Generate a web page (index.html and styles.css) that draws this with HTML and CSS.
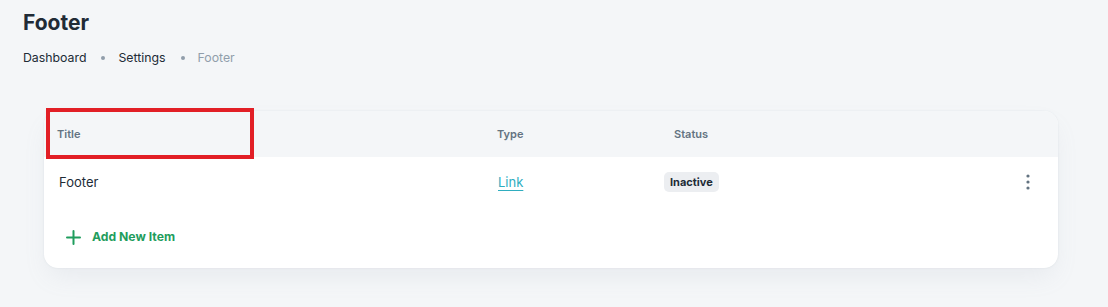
FILE: index.html
```html
<!DOCTYPE html>
<html>
<head>
<meta charset="utf-8">
<link rel="stylesheet" href="styles.css">
</head>
<body>
<div class="page">
  <h1 class="title">Footer</h1>
  <nav class="crumbs">
    <span class="crumb">Dashboard</span>
    <span class="dot"></span>
    <span class="crumb">Settings</span>
    <span class="dot"></span>
    <span class="crumb current">Footer</span>
  </nav>
  <div class="card">
    <div class="head">
      <div class="h-title">Title</div>
      <div class="h-type">Type</div>
      <div class="h-status">Status</div>
      <div class="highlight"></div>
    </div>
    <div class="row">
      <div class="c-title">Footer</div>
      <div class="c-type"><a class="link" href="#">Link</a></div>
      <div class="c-status"><span class="badge">Inactive</span></div>
      <div class="c-menu">
        <svg width="4" height="16" viewBox="0 0 4 16"><circle cx="2" cy="2" r="1.6" fill="#637381"/><circle cx="2" cy="8" r="1.6" fill="#637381"/><circle cx="2" cy="14" r="1.6" fill="#637381"/></svg>
      </div>
    </div>
    <div class="add">
      <svg width="15" height="15" viewBox="0 0 15 15"><path d="M7.5 1v13M1 7.5h13" stroke="#1f9d5d" stroke-width="2" stroke-linecap="round"/></svg>
      <span>Add New Item</span>
    </div>
  </div>
</div>
</body>
</html>
```

FILE: styles.css
```css
* { box-sizing: border-box; }
html, body { margin: 0; padding: 0; }
body {
  background: #f4f6f8;
  font-family: Inter, "Noto Sans", "Liberation Sans", sans-serif;
  color: #212b36;
  width: 1108px;
  height: 307px;
  overflow: hidden;
}
.page {
  padding: 9px 50px 0 23px;
}
.title {
  margin: 0;
  font-size: 21px;
  font-weight: 700;
  line-height: 28px;
  color: #212b36;
}
.crumbs {
  display: flex;
  align-items: center;
  margin-top: 11px;
  font-size: 12.3px;
  line-height: 20px;
  color: #212b36;
}
.dot {
  width: 4px;
  height: 4px;
  border-radius: 50%;
  background: #919eab;
  margin: 0 13px 0 15px;
}
.current { color: #919eab; }
.card {
  margin: 43px 0 0 21px;
  width: 1014px;
  background: #fff;
  border-radius: 14px;
  box-shadow: 0 0 2px rgba(145,158,171,0.2), 0 12px 24px -4px rgba(145,158,171,0.12);
}
.head {
  position: relative;
  display: flex;
  align-items: center;
  height: 46px;
  background: #f4f6f8;
  border-radius: 14px 14px 0 0;
  padding-left: 13px;
  font-size: 11px;
  font-weight: 600;
  color: #637381;
}
.h-title { width: 440px; }
.h-type { width: 177px; }
.highlight {
  position: absolute;
  left: 2px;
  top: -3px;
  width: 208px;
  height: 51px;
  border: 4px solid #e21f26;
}
.row {
  display: flex;
  align-items: center;
  height: 50px;
  padding-left: 15px;
  font-size: 13px;
  color: #212b36;
}
.c-title { width: 439px; }
.c-type { width: 166px; }
.c-status { flex: 1; }
.link {
  color: #2fadbf;
  text-decoration: underline;
  text-underline-offset: 3px;
}
.badge {
  display: inline-flex;
  align-items: center;
  height: 20px;
  padding: 0 6px;
  border-radius: 5px;
  background: #eceef1;
  font-size: 11px;
  font-weight: 700;
  color: #212b36;
}
.c-menu {
  width: 60px;
  display: flex;
  justify-content: center;
}
.add {
  display: flex;
  align-items: center;
  gap: 11px;
  height: 61px;
  padding: 0 0 0 22px;
  font-size: 12.2px;
  font-weight: 700;
  color: #1f9d5d;
}
.add span { margin-top: -2px; }
.add svg { margin-top: -1px; }
```
